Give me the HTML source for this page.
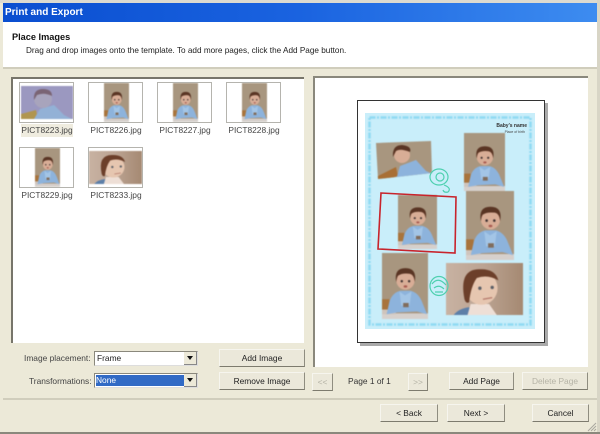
<!DOCTYPE html>
<html><head><meta charset="utf-8">
<style>
html,body{margin:0;padding:0;width:600px;height:434px;overflow:hidden;background:#ece9d8}
#w{position:absolute;left:0;top:0;width:600px;height:434px;overflow:hidden;background:#ece9d8;font:8.4px "Liberation Sans",sans-serif;color:#222;filter:blur(.3px)}
.a{position:absolute;white-space:nowrap}
.b{position:absolute;box-sizing:border-box;background:#ebe8da;border-right:1px solid #8f8d80;border-bottom:1px solid #7d7b6e;border-top:1px solid #f6f5ee;border-left:1px solid #f6f5ee;text-align:center;line-height:16px;color:#222}
.d{color:#b5b3a6}
.t{position:absolute;box-sizing:border-box;width:55px;height:41px;background:#fff;border:1px solid #b5b4ae;overflow:hidden}
.l{position:absolute;width:70px;text-align:center;color:#444}
.c{position:absolute;left:94px;width:104px;height:15px;box-sizing:border-box;background:#fff;border:1px solid #8a887c;border-right-color:#ddd;border-bottom-color:#ddd;line-height:13px;padding-left:2px}
.ar{position:absolute;right:0;top:0;width:13px;height:13px;box-sizing:border-box;background:#ece9d8;border-right:1px solid #888;border-bottom:1px solid #888}
.ar:after{content:"";position:absolute;left:3px;top:4px;border:3px solid transparent;border-top:4px solid #111;border-bottom:0}
.ph{filter:blur(.5px)}
</style></head><body>
<div id="w">
<svg width="0" height="0" style="position:absolute">
<defs>
<g id="baby">
<rect x="0" y="0" width="100" height="140" fill="#a8967f"/>
<rect x="0" y="128" width="100" height="12" fill="#d6d0cc"/>
<rect x="0" y="98" width="16" height="22" fill="#a8743c"/>
<rect x="0" y="120" width="30" height="10" fill="#cfc4bc"/>
<path d="M10 130 L16 104 Q22 84 40 80 L62 80 Q80 84 88 106 L98 130 L76 124 L34 126 Z" fill="#8db3dc"/>
<path d="M38 82 L50 90 L64 82 L60 112 L42 112 Z" fill="#a3c5e6"/>
<rect x="46" y="106" width="12" height="9" fill="#806c5c"/>
<circle cx="51" cy="58" r="20" fill="#d8ad96"/>
<path d="M31 62 Q25 32 51 32 Q77 32 71 62 Q70 46 60 44 Q44 42 35 48 Q32 52 31 62Z" fill="#5a3524"/>
<circle cx="43" cy="60" r="2.600" fill="#3d3030"/><circle cx="59" cy="60" r="2.600" fill="#3d3030"/>
<ellipse cx="51" cy="71" rx="4" ry="2.500" fill="#a85a50"/>
</g>
<g id="close">
<defs><linearGradient id="cg"><stop offset="0" stop-color="#c8b2a2"/><stop offset=".5" stop-color="#bba392"/><stop offset="1" stop-color="#a58972"/></linearGradient></defs>
<rect x="0" y="0" width="100" height="66" fill="url(#cg)"/>
<path d="M10 66 Q16 58 30 56 L34 66Z" fill="#5d7fa8"/>
<path d="M28 66 L32 52 L56 52 L66 66Z" fill="#eedfd6"/>
<circle cx="46" cy="32" r="21" fill="#e6c6b0"/>
<path d="M24 46 Q16 6 46 8 Q64 8 68 22 Q54 14 40 19 Q32 30 30 50 Q26 52 24 46Z" fill="#6c3f2a"/>
<circle cx="44" cy="32" r="2.200" fill="#5a5e66"/><circle cx="60" cy="31" r="2.200" fill="#5a5e66"/>
<path d="M48 46 L60 44" stroke="#b57a6c" stroke-width="1.600"/>
</g>
</defs>
</svg>

<!-- window chrome -->
<div class="a" style="left:0;top:0;width:600px;height:3px;background:#dcdad0"></div>
<div class="a" style="left:3px;top:3px;width:594px;height:19px;background:linear-gradient(90deg,#0a4ed0 0%,#1a63e0 50%,#3d8cf0 100%);color:#fff;font:bold 10px/19px 'Liberation Sans',sans-serif;padding-left:2px;box-sizing:border-box">Print and Export</div>
<div class="a" style="left:3px;top:22px;width:594px;height:45px;background:#fff"></div>
<div class="a" style="left:3px;top:67px;width:594px;height:2px;background:#d0cdbc"></div>
<div class="a" style="left:12px;top:32px;font:bold 9.2px 'Liberation Sans',sans-serif;color:#111">Place Images</div>
<div class="a" style="left:26px;top:46px;color:#222;font-size:8.2px">Drag and drop images onto the template. To add more pages, click the Add Page button.</div>
<div class="a" style="left:597px;top:0;width:3px;height:434px;background:#d8d5c6"></div>
<div class="a" style="left:0;top:432px;width:600px;height:2px;background:#8a887c"></div>

<!-- left list -->
<div class="a" style="left:11px;top:77px;width:293px;height:266px;background:#fff;border-left:2px solid #77756a;border-top:2px solid #77756a;box-sizing:border-box"></div>

<div class="t" style="left:19px;top:82px">
<svg width="53" height="39" style="position:absolute;left:0;top:0" class="ph"><rect x="1" y="3" width="52" height="33" fill="#9b98c0"/>
<path d="M1 36 L1 31 L16 27 L18 36Z" fill="#b09550"/>
<path d="M14 36 L20 26 L34 22 L44 32 L52 36Z" fill="#93b1d6"/><circle cx="23" cy="16" r="9" fill="#a8a4bc"/><path d="M14 17 Q13 6 23 6 Q32 6 32 13 Q24 9 17 12Z" fill="#7a6474"/></svg></div>
<div class="a" style="left:21px;top:124px;width:52px;height:13px;background:#efecdf"></div>
<div class="l" style="left:12px;top:125px">PICT8223.jpg</div>

<div class="t" style="left:88px;top:82px"><svg width="53" height="39" class="ph"><svg x="15" y="0" width="25" height="39" viewBox="0 0 100 140" preserveAspectRatio="none"><use href="#baby"/></svg></svg></div>
<div class="l" style="left:81px;top:125px">PICT8226.jpg</div>
<div class="t" style="left:157px;top:82px"><svg width="53" height="39" class="ph"><svg x="15" y="0" width="25" height="39" viewBox="0 0 100 140" preserveAspectRatio="none"><use href="#baby"/></svg></svg></div>
<div class="l" style="left:150px;top:125px">PICT8227.jpg</div>
<div class="t" style="left:226px;top:82px"><svg width="53" height="39" class="ph"><svg x="15" y="0" width="25" height="39" viewBox="0 0 100 140" preserveAspectRatio="none"><use href="#baby"/></svg></svg></div>
<div class="l" style="left:219px;top:125px">PICT8228.jpg</div>
<div class="t" style="left:19px;top:147px"><svg width="53" height="39" class="ph"><svg x="15" y="0" width="25" height="39" viewBox="0 0 100 140" preserveAspectRatio="none"><use href="#baby"/></svg></svg></div>
<div class="l" style="left:12px;top:190px">PICT8229.jpg</div>
<div class="t" style="left:88px;top:147px"><svg width="53" height="39" class="ph"><svg x="0" y="3" width="53" height="33" viewBox="0 0 100 66" preserveAspectRatio="none"><use href="#close"/></svg></svg></div>
<div class="l" style="left:81px;top:190px">PICT8233.jpg</div>

<!-- controls -->
<div class="a" style="left:24px;top:353px;color:#444">Image placement:</div>
<div class="a" style="left:29px;top:376px;color:#444">Transformations:</div>
<div class="c" style="top:351px">Frame<div class="ar"></div></div>
<div class="c" style="top:373px"><span style="position:absolute;left:1px;top:1px;width:88px;height:11px;background:#316ac5;color:#fff;line-height:11px">None</span><div class="ar"></div></div>
<div class="b" style="left:219px;top:349px;width:86px;height:18px">Add Image</div>
<div class="b" style="left:219px;top:372px;width:86px;height:18px">Remove Image</div>

<!-- right preview -->
<div class="a" style="left:313px;top:76px;width:275px;height:291px;background:#fff;border-left:2px solid #8a887c;border-top:2px solid #8a887c;box-sizing:border-box"></div>
<svg class="a" style="left:340px;top:90px" width="220" height="270" viewBox="340 90 220 270">
<rect x="360" y="103" width="188" height="243" fill="#aaa"/>
<rect x="357.500" y="100.500" width="187" height="242" fill="#fff" stroke="#333"/>
<rect x="365" y="113" width="170" height="216" fill="#c9eefa"/>
<rect x="369.500" y="117.500" width="161" height="207" fill="none" stroke="#8fd9f2" stroke-width="2.500" stroke-dasharray="6 1.500 2 1.500" class="ph"/>
<g class="ph">
<!-- photo 1 -->
<clipPath id="p1"><polygon points="376,143 431,141 432,173 378,179"/></clipPath>
<polygon points="376,143 431,141 432,173 378,179" fill="#a8967f"/>
<g clip-path="url(#p1)"><path d="M376 177 L396 167 L398 176 L380 182Z" fill="#a86f35"/><path d="M396 180 L400 166 L416 160 L426 171 L433 174 L433 182Z" fill="#8db3dc"/><circle cx="402" cy="155" r="8" fill="#d8ad96"/><path d="M393 157 Q392 145 402 145 Q412 146 410 152 Q400 148 396 151Z" fill="#5a3524"/></g>
<!-- photo 2 -->
<svg x="464" y="133" width="41" height="58" viewBox="0 0 100 140" preserveAspectRatio="none"><use href="#baby"/></svg>
<!-- photo 4 -->
<svg x="466" y="191" width="48" height="69" viewBox="0 0 100 140" preserveAspectRatio="none"><use href="#baby"/></svg>
<!-- frame photo -->
<svg x="398" y="195" width="39" height="54" viewBox="0 0 100 140" preserveAspectRatio="none"><use href="#baby"/></svg>
<!-- photo 5 -->
<svg x="382" y="253" width="46" height="66" viewBox="0 0 100 140" preserveAspectRatio="none"><use href="#baby"/></svg>
<!-- photo 6 -->
<svg x="446" y="263" width="77" height="52" viewBox="0 0 100 66" preserveAspectRatio="none"><use href="#close"/></svg>
</g>
<polygon points="381,193 456,197 455,253 378,249" fill="none" stroke="#c8242c" stroke-width="1.600"/>
<!-- swirls -->
<g fill="none" stroke="#4fd0b0" stroke-width="1.200">
<ellipse cx="439" cy="177" rx="9" ry="8"/><circle cx="440" cy="177" r="4"/><path d="M444 185 Q452 188 448 192 Q444 193 443 190"/>
<ellipse cx="439" cy="286" rx="9" ry="9.500"/><path d="M432 284 Q438 276 446 285 M434 288 Q439 284 444 289 M435 292 L443 292"/>
</g>
<text x="527" y="127" text-anchor="end" font-family="Liberation Sans" font-size="5" font-weight="bold" fill="#333">Baby's name</text>
<text x="525" y="133" text-anchor="end" font-family="Liberation Sans" font-size="3.500" fill="#444">Place of birth</text>
</svg>

<!-- nav buttons -->
<div class="b d" style="left:312px;top:373px;width:21px;height:18px">&lt;&lt;</div>
<div class="a" style="left:348px;top:376px;color:#333">Page 1 of 1</div>
<div class="b d" style="left:408px;top:373px;width:20px;height:18px">&gt;&gt;</div>
<div class="b" style="left:449px;top:372px;width:65px;height:18px">Add Page</div>
<div class="b d" style="left:522px;top:372px;width:66px;height:18px">Delete Page</div>

<div class="a" style="left:3px;top:398px;width:594px;height:2px;background:#d0cdbc"></div>
<div class="b" style="left:380px;top:404px;width:58px;height:18px">&lt; Back</div>
<div class="b" style="left:447px;top:404px;width:58px;height:18px">Next &gt;</div>
<div class="b" style="left:532px;top:404px;width:57px;height:18px">Cancel</div>
<svg class="a" style="left:587px;top:421px" width="10" height="11"><path d="M1 10 L9 2 M4 10 L9 5 M7 10 L9 8" stroke="#aaa8a0" fill="none"/></svg>
</div>
</body></html>
